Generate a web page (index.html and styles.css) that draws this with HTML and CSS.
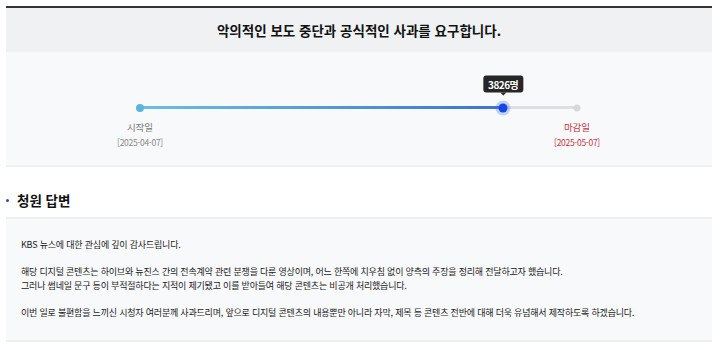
FILE: index.html
```html
<!DOCTYPE html>
<html lang="ko">
<head>
  <meta charset="UTF-8">
  <meta name="viewport" content="width=device-width, initial-scale=1.0">
  <title>청원 상세</title>
  <link rel="stylesheet" href="styles.css">
</head>
<body>
  <div class="petition">
    <div class="petition-head">
      <h2>악의적인 보도 중단과 공식적인 사과를 요구합니다.</h2>
    </div>

    <div class="progress-box">
      <div class="track">
        <div class="bar-fill" style="width: 83.1%"></div>
        <span class="dot dot-start"></span>
        <span class="dot dot-now" style="left: 83.1%">
          <span class="count-tip">3826명</span>
        </span>
        <span class="dot dot-end"></span>
      </div>
      <div class="labels">
        <div class="label">
          <span class="label-name">시작일</span>
          <span class="label-date">[2025-04-07]</span>
        </div>
        <div class="label label-end">
          <span class="label-name">마감일</span>
          <span class="label-date">[2025-05-07]</span>
        </div>
      </div>
    </div>
  </div>

  <h3 class="section-title">청원 답변</h3>

  <div class="answer">
    <p>KBS 뉴스에 대한 관심에 깊이 감사드립니다.</p>
    <p>해당 디지털 콘텐츠는 하이브와 뉴진스 간의 전속계약 관련 분쟁을 다룬 영상이며, 어느 한쪽에 치우침 없이 양측의 주장을 정리해 전달하고자 했습니다.<br>그러나 썸네일 문구 등이 부적절하다는 지적이 제기됐고 이를 받아들여 해당 콘텐츠는 비공개 처리했습니다.</p>
    <p>이번 일로 불편함을 느끼신 시청자 여러분께 사과드리며, 앞으로 디지털 콘텐츠의 내용뿐만 아니라 자막, 제목 등 콘텐츠 전반에 대해 더욱 유념해서 제작하도록 하겠습니다.</p>
  </div>
</body>
</html>
```

FILE: styles.css
```css
body {
  margin: 0;
  padding: 6px 8px 0 6px;
  background: #fff;
  font-family: "Noto Sans CJK KR", "Noto Sans", sans-serif;
  color: #222;
}
.petition {
  border-top: 2px solid #333;
}
.petition-head {
  background-color: #eff1f3;
  height: 44px;
  display: flex;
  align-items: center;
  justify-content: center;
}
.petition-head h2 {
  margin: 0;
  font-size: 13.5px;
  font-weight: 700;
  letter-spacing: 0;
  color: #111;
}
.progress-box {
  background-color: #f8f9fb;
  border-bottom: 2px solid #edf1f5;
  padding: 54px 135px 0 134px;
  height: 59px;
}
.track {
  position: relative;
  height: 3px;
  background-color: #dddfe2;
  border-radius: 2px;
}
.bar-fill {
  height: 3px;
  border-radius: 2px;
  background: linear-gradient(to right, #6cc0e2, #3c74cc);
}
.dot {
  position: absolute;
  top: 50%;
  border-radius: 50%;
  transform: translate(-50%, -50%);
}
.dot-start {
  left: 0;
  width: 8px;
  height: 8px;
  background-color: #5eb3dc;
}
.dot-end {
  left: 100%;
  width: 7px;
  height: 7px;
  background-color: #d6d8db;
}
.dot-now {
  width: 9px;
  height: 9px;
  background-color: #1348e6;
  box-shadow: 0 0 0 3px rgba(70, 120, 240, 0.3);
}
.count-tip {
  position: absolute;
  left: 50%;
  bottom: 20px;
  transform: translateX(-50%);
  background-color: #262626;
  color: #fff;
  font-size: 10px;
  font-weight: 700;
  letter-spacing: -0.5px;
  line-height: 17px;
  padding: 0 5px;
  border-radius: 3px;
  white-space: nowrap;
}
.count-tip::after {
  content: "";
  position: absolute;
  left: 50%;
  top: 100%;
  margin-left: -3px;
  border: 3px solid transparent;
  border-top-color: #262626;
}
.labels {
  display: flex;
  justify-content: space-between;
  margin: 11px -30px 0;
}
.label {
  width: 60px;
  display: flex;
  flex-direction: column;
  align-items: center;
  line-height: 15px;
  color: #777;
}
.label-name {
  font-size: 9.5px;
}
.label-date {
  font-size: 8.5px;
  letter-spacing: -0.3px;
  color: #888;
}
.label-end .label-name,
.label-end .label-date {
  color: #c8363f;
}
.section-title {
  margin: 23px 0 0;
  padding-left: 11px;
  position: relative;
  font-size: 13.5px;
  font-weight: 700;
  line-height: 20px;
  color: #111;
}
.section-title::before {
  content: "";
  position: absolute;
  left: 0;
  top: 9px;
  width: 3px;
  height: 3px;
  border-radius: 50%;
  background-color: #2a4fa8;
}
.answer {
  margin-top: 7px;
  background-color: #f8f9fb;
  border-top: 2px solid #eceff3;
  border-bottom: 2px solid #eceff3;
  padding: 19px 15px 10px;
  height: 92px;
  font-size: 9px;
  line-height: 14px;
  letter-spacing: -0.2px;
  color: #1a1a1a;
}
.answer p {
  margin: 0 0 13px;
}
```
